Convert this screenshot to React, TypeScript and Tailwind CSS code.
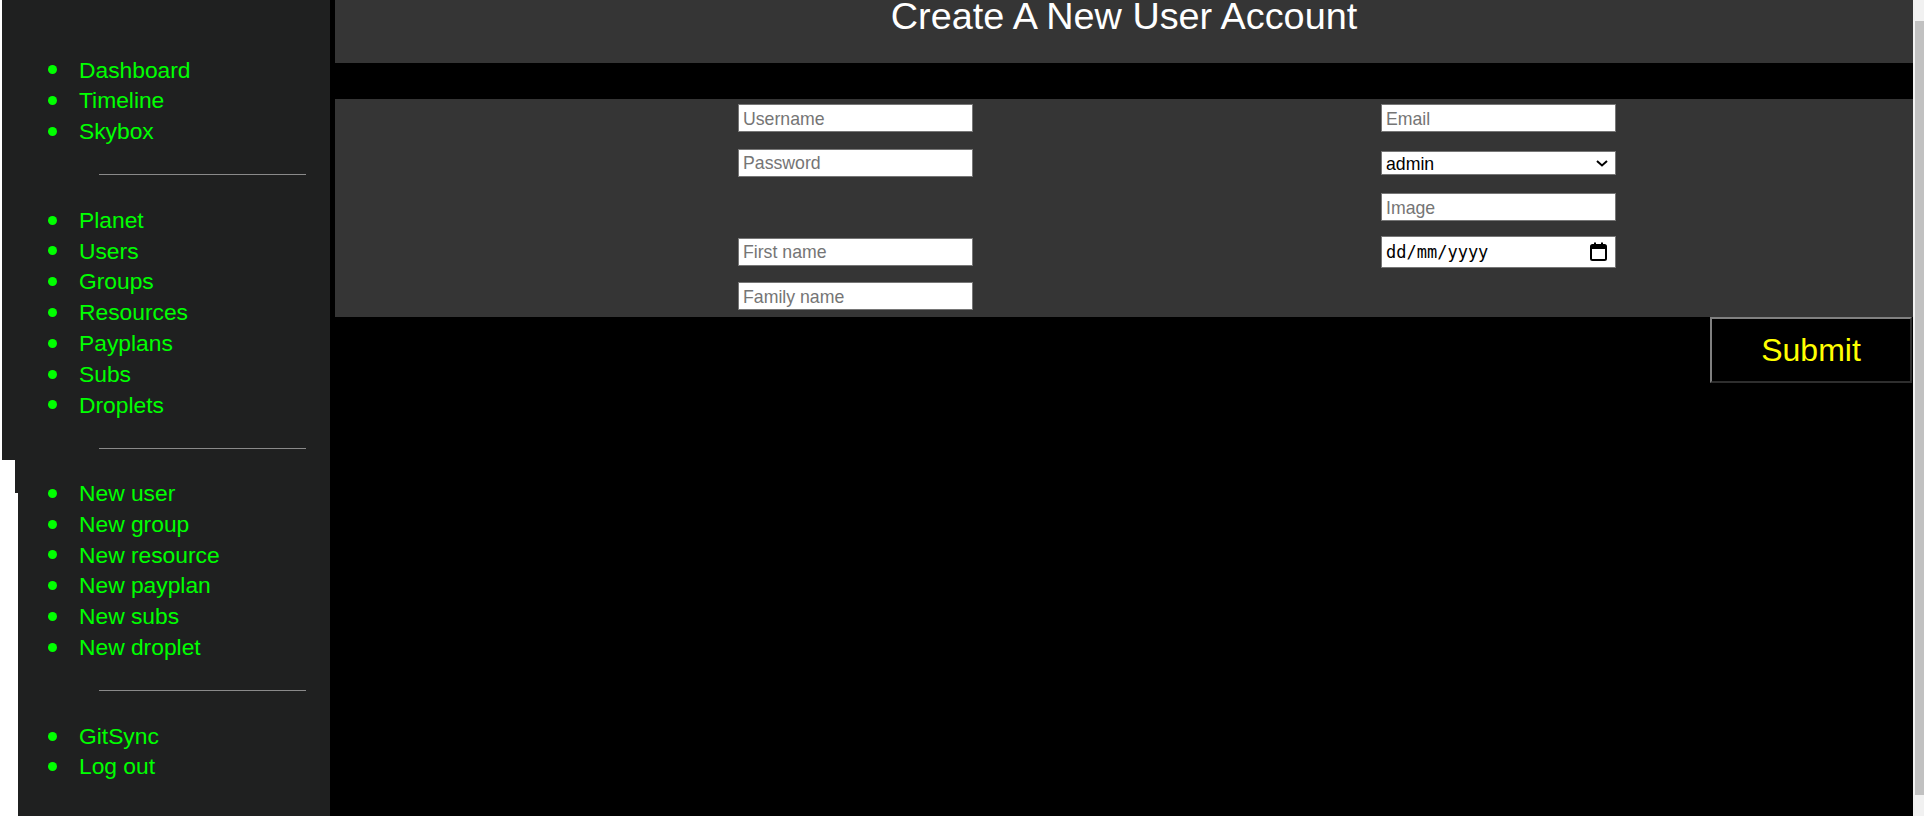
import React from "react";

const FONT = { fontFamily: '"Liberation Sans", Arial, sans-serif' };

function NavList({ items }: { items: string[] }) {
  return (
    <ul className="flex flex-col">
      {items.map((t) => (
        <li key={t} className="flex items-center pl-[30px] h-[30.8px]">
          <span className="w-[9px] h-[9px] rounded-full bg-[#00ff00] shrink-0" />
          <a className="ml-[22px] text-[22.8px] leading-[30.8px] text-[#00ff00] whitespace-nowrap" href="#">
            {t}
          </a>
        </li>
      ))}
    </ul>
  );
}

function Rule({ mt, mb }: { mt: string; mb: string }) {
  return <div className={`ml-[81px] w-[207px] h-px bg-[#8a8a8a] ${mt} ${mb}`} />;
}

function TextInput({ placeholder }: { placeholder: string }) {
  return (
    <input
      type="text"
      placeholder={placeholder}
      className="w-[235px] h-[28px] border border-[#767676] bg-white px-[4px] pt-[2px] pb-0 text-[17.7px] text-black placeholder:text-[#757575] outline-none"
      style={FONT}
    />
  );
}

export default function App() {
  return (
    <div className="flex h-[816px] w-[1924px] overflow-hidden bg-black" style={FONT}>
      {/* Sidebar */}
      <div className="flex w-[330px] shrink-0">
        <div className="flex flex-col w-[18px] shrink-0">
          <div className="flex h-[460px]">
            <div className="w-[2px] bg-white" />
            <div className="flex-1 bg-[#1f2020]" />
          </div>
          <div className="flex h-[33px]">
            <div className="w-[15px] bg-white" />
            <div className="flex-1 bg-[#1f2020]" />
          </div>
          <div className="flex-1 bg-white" />
        </div>
        <nav className="flex-1 bg-[#1f2020] pt-[54.6px] flex flex-col">
          <NavList items={["Dashboard", "Timeline", "Skybox"]} />
          <Rule mt="mt-[27.2px]" mb="mb-[29.6px]" />
          <NavList items={["Planet", "Users", "Groups", "Resources", "Payplans", "Subs", "Droplets"]} />
          <Rule mt="mt-[28px]" mb="mb-[28.6px]" />
          <NavList items={["New user", "New group", "New resource", "New payplan", "New subs", "New droplet"]} />
          <Rule mt="mt-[27.3px]" mb="mb-[29.6px]" />
          <NavList items={["GitSync", "Log out"]} />
        </nav>
      </div>

      {/* gap */}
      <div className="w-[5px] shrink-0 bg-black" />

      {/* Main */}
      <main className="flex flex-col w-[1578px] shrink-0 bg-black">
        <header className="h-[63px] bg-[#353535] flex justify-center">
          <h1 className="text-[37.8px] leading-[32.4px] text-white font-normal whitespace-nowrap">Create A New User Account</h1>
        </header>
        <div className="h-[36px]" />
        <form className="h-[218px] bg-[#353535] pl-[403px] grid grid-cols-[235px_235px] grid-rows-[38.6px_38.6px_38.6px_38.6px_38.6px] gap-x-[408px] gap-y-[5.9px] items-center">
          <TextInput placeholder="Username" />
          <TextInput placeholder="Email" />

          <TextInput placeholder="Password" />
          <div className="relative w-[235px] h-[24px]">
            <select
              defaultValue="admin"
              className="appearance-none w-[235px] h-[24px] border border-[#767676] bg-white pl-[4px] pt-[1px] text-[17.7px] leading-[22px] text-black outline-none"
              style={FONT}
            >
              <option value="admin">admin</option>
              <option value="user">user</option>
            </select>
            <svg
              className="absolute right-[8px] top-[9px] pointer-events-none"
              width="12"
              height="7"
              viewBox="0 0 12 7"
            >
              <path d="M1 1 L6 5.5 L11 1" fill="none" stroke="black" strokeWidth="2" />
            </svg>
          </div>

          <div />
          <TextInput placeholder="Image" />

          <TextInput placeholder="First name" />
          <div className="flex items-center justify-between w-[235px] h-[32px] border border-[#767676] bg-white pl-[4px] pr-[8px]">
            <span
              className="text-[17px] text-black pt-[2px]"
              style={{ fontFamily: '"DejaVu Sans Mono", "Liberation Mono", monospace' }}
            >
              dd/mm/yyyy
            </span>
            <svg width="17" height="19" viewBox="0 0 17 19">
              <rect x="1" y="3" width="15" height="15" rx="1.5" fill="none" stroke="black" strokeWidth="2" />
              <rect x="1" y="3" width="15" height="4" fill="black" />
              <rect x="4" y="0.5" width="2" height="3" fill="black" />
              <rect x="11" y="0.5" width="2" height="3" fill="black" />
            </svg>
          </div>

          <TextInput placeholder="Family name" />
          <div />
        </form>
        <div className="flex justify-end pr-[1px]">
          <button
            type="button"
            className="w-[202px] h-[66px] bg-black text-[#ffff00] text-[32px] border-2 border-t-[#808080] border-l-[#808080] border-b-[#2e2e2e] border-r-[#2e2e2e]"
            style={FONT}
          >
            Submit
          </button>
        </div>
      </main>

      {/* Scrollbar */}
      <div className="w-[11px] shrink-0 bg-[#f1f1f1] flex flex-col pt-[21px] pb-[21px] pl-[2px]">
        <div className="flex-1 bg-[#c1c1c1]" />
      </div>
    </div>
  );
}
